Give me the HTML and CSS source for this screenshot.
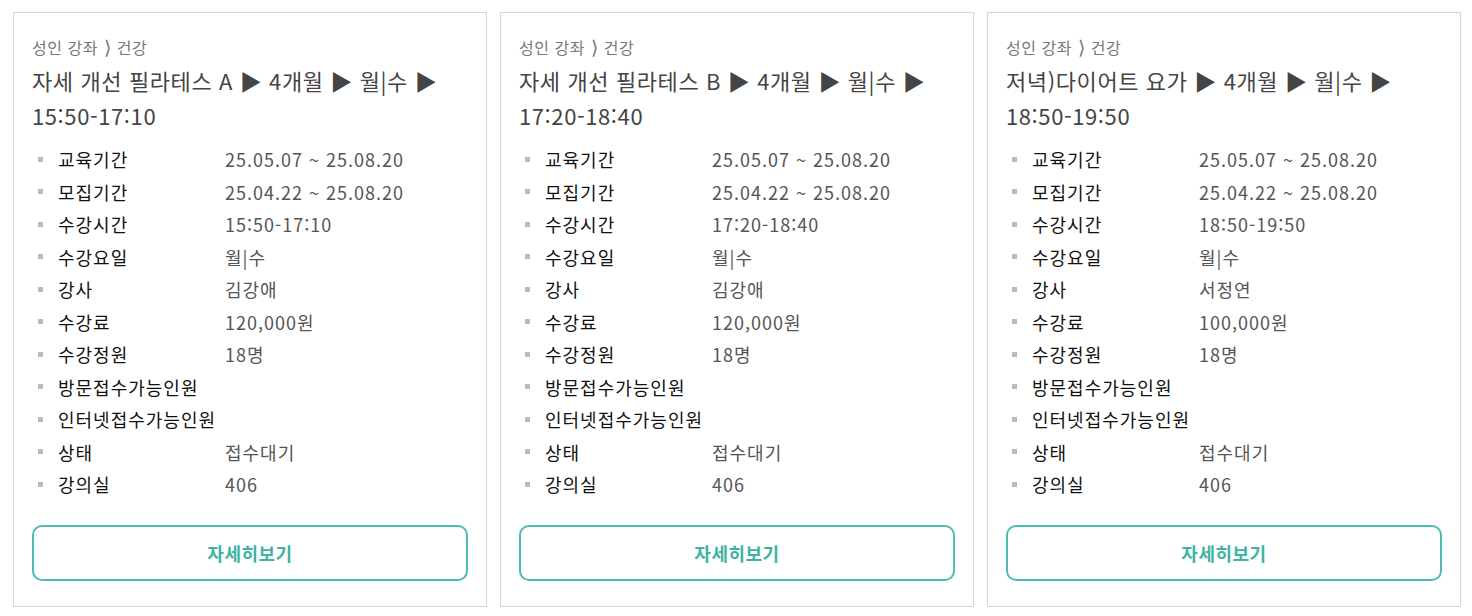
FILE: index.html
```html
<!DOCTYPE html>
<html lang="ko">
<head>
  <meta charset="UTF-8">
  <meta name="viewport" content="width=device-width, initial-scale=1.0">
  <title>강좌 목록</title>
  <link rel="stylesheet" href="styles.css">
</head>
<body>

  <div class="course-list">
    <!-- Course 1 -->
    <div class="course-card">
      <p class="category">성인 강좌<span class="sep">⟩</span>건강</p>
      <h3 class="course-title">자세 개선 필라테스 A ▶ 4개월 ▶ 월|수 ▶ 15:50-17:10</h3>
      <ul class="info-list">
        <li><span class="label">교육기간</span><span class="value">25.05.07 ~ 25.08.20</span></li>
        <li><span class="label">모집기간</span><span class="value">25.04.22 ~ 25.08.20</span></li>
        <li><span class="label">수강시간</span><span class="value">15:50-17:10</span></li>
        <li><span class="label">수강요일</span><span class="value">월|수</span></li>
        <li><span class="label">강사</span><span class="value">김강애</span></li>
        <li><span class="label">수강료</span><span class="value">120,000원</span></li>
        <li><span class="label">수강정원</span><span class="value">18명</span></li>
        <li><span class="label">방문접수가능인원</span><span class="value"></span></li>
        <li><span class="label">인터넷접수가능인원</span><span class="value"></span></li>
        <li><span class="label">상태</span><span class="value">접수대기</span></li>
        <li><span class="label">강의실</span><span class="value">406</span></li>
      </ul>
      <button class="detail-btn">자세히보기</button>
    </div>

    <!-- Course 2 -->
    <div class="course-card">
      <p class="category">성인 강좌<span class="sep">⟩</span>건강</p>
      <h3 class="course-title">자세 개선 필라테스 B ▶ 4개월 ▶ 월|수 ▶ 17:20-18:40</h3>
      <ul class="info-list">
        <li><span class="label">교육기간</span><span class="value">25.05.07 ~ 25.08.20</span></li>
        <li><span class="label">모집기간</span><span class="value">25.04.22 ~ 25.08.20</span></li>
        <li><span class="label">수강시간</span><span class="value">17:20-18:40</span></li>
        <li><span class="label">수강요일</span><span class="value">월|수</span></li>
        <li><span class="label">강사</span><span class="value">김강애</span></li>
        <li><span class="label">수강료</span><span class="value">120,000원</span></li>
        <li><span class="label">수강정원</span><span class="value">18명</span></li>
        <li><span class="label">방문접수가능인원</span><span class="value"></span></li>
        <li><span class="label">인터넷접수가능인원</span><span class="value"></span></li>
        <li><span class="label">상태</span><span class="value">접수대기</span></li>
        <li><span class="label">강의실</span><span class="value">406</span></li>
      </ul>
      <button class="detail-btn">자세히보기</button>
    </div>

    <!-- Course 3 -->
    <div class="course-card">
      <p class="category">성인 강좌<span class="sep">⟩</span>건강</p>
      <h3 class="course-title">저녁)다이어트 요가 ▶ 4개월 ▶ 월|수 ▶ 18:50-19:50</h3>
      <ul class="info-list">
        <li><span class="label">교육기간</span><span class="value">25.05.07 ~ 25.08.20</span></li>
        <li><span class="label">모집기간</span><span class="value">25.04.22 ~ 25.08.20</span></li>
        <li><span class="label">수강시간</span><span class="value">18:50-19:50</span></li>
        <li><span class="label">수강요일</span><span class="value">월|수</span></li>
        <li><span class="label">강사</span><span class="value">서정연</span></li>
        <li><span class="label">수강료</span><span class="value">100,000원</span></li>
        <li><span class="label">수강정원</span><span class="value">18명</span></li>
        <li><span class="label">방문접수가능인원</span><span class="value"></span></li>
        <li><span class="label">인터넷접수가능인원</span><span class="value"></span></li>
        <li><span class="label">상태</span><span class="value">접수대기</span></li>
        <li><span class="label">강의실</span><span class="value">406</span></li>
      </ul>
      <button class="detail-btn">자세히보기</button>
    </div>
  </div>

</body>
</html>
```

FILE: styles.css
```css
:root {
  --border-color: #d6d6d6;
  --title-color: #444;
  --label-color: #111;
  --text-color: #555;
  --muted-color: #777;
  --bullet-color: #bbb;
  --point-color: #4dbcae;
  --point-text-color: #3db3a3;
}

body {
  font-family: 'Noto Sans CJK KR', 'Noto Sans', sans-serif;
  margin: 0;
  padding: 12px 11px 0 13px;
  background-color: #fff;
}

.course-list {
  display: grid;
  grid-template-columns: repeat(3, 1fr);
  gap: 13px;
}

.course-card {
  border: 1px solid var(--border-color);
  padding: 23px 18px 25px;
  display: flex;
  flex-direction: column;
}

.category {
  margin: 0 0 5px;
  font-size: 16px;
  line-height: 22px;
  letter-spacing: 0.5px;
  color: var(--muted-color);
}

.category .sep {
  font-family: 'DejaVu Sans', sans-serif;
  font-size: 19px;
  line-height: 0;
  margin: 0 5px 0 6px;
}

.course-title {
  margin: 0 0 10px;
  font-size: 22px;
  line-height: 35px;
  font-weight: normal;
  letter-spacing: 0.6px;
  color: var(--title-color);
}

.info-list {
  list-style: none;
  margin: 0 0 24px;
  padding: 0;
}

.info-list li {
  display: flex;
  align-items: center;
  height: 32.5px;
  font-size: 18px;
  letter-spacing: 1px;
}

.info-list li::before {
  content: '';
  width: 5px;
  height: 5px;
  margin: 0 15px 0 6px;
  background-color: var(--bullet-color);
  flex-shrink: 0;
}

.label {
  width: 167px;
  flex-shrink: 0;
  color: var(--label-color);
  white-space: nowrap;
}

.value {
  color: var(--text-color);
}

.detail-btn {
  height: 56px;
  border: 2px solid var(--point-color);
  border-radius: 10px;
  background-color: #fff;
  color: var(--point-text-color);
  font-family: inherit;
  font-size: 18px;
  font-weight: bold;
  letter-spacing: 0.5px;
  cursor: pointer;
}
```
